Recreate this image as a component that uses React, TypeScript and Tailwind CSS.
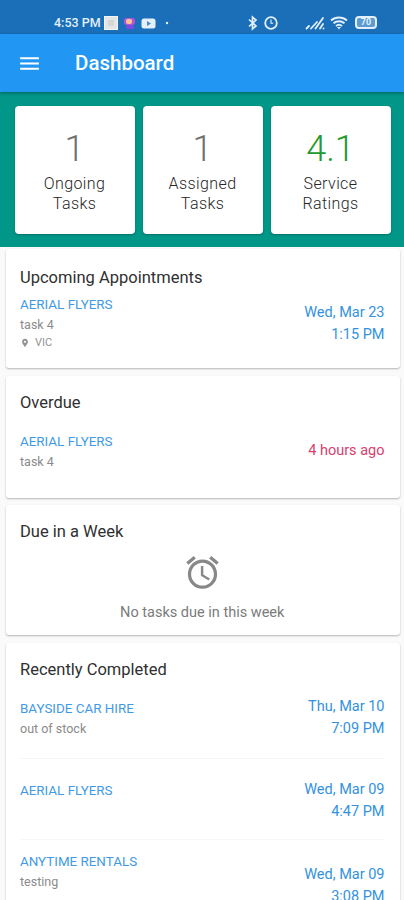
import type { ReactNode } from "react"
import { MdAccessAlarm, MdLocationPin, MdMenu } from "react-icons/md"

function StatusBar() {
  return (
    <div className="flex h-[34px] shrink-0 items-start bg-[#1a6fb8] pt-[15px] pr-[27px] pl-[54px] text-[#e3f0fb]">
      <span className="w-[50px] text-[12.5px] leading-4 font-medium whitespace-nowrap">4:53 PM</span>
      <svg className="h-4 w-[70px]" viewBox="0 0 70 16" aria-hidden>
        <rect x="0.5" y="1.5" width="13" height="13" fill="#e4e6e6" stroke="#f4f4f4" />
        <rect x="4" y="5" width="6" height="6" fill="#d3d7d6" />
        <rect x="20" y="3" width="11" height="7" rx="3" fill="#b455d6" />
        <rect x="22" y="4" width="6" height="5" rx="2" fill="#ffc09a" />
        <rect x="22" y="10" width="8" height="4" rx="1.5" fill="#7a4be0" />
        <rect x="37.5" y="3.5" width="14" height="10" rx="2.5" fill="#e3f0fb" />
        <path d="M43 6v5l4-2.500z" fill="#4c8cc6" />
        <circle cx="63" cy="8" r="1.200" fill="#e3f0fb" />
      </svg>
      <div className="ml-auto flex">
        <svg className="mr-0.5 size-4" viewBox="0 0 16 16" fill="none" stroke="currentColor" strokeWidth="1.700" aria-hidden>
          <path d="M4 4.500l7 6.500-3.500 3V2L11 5l-7 6.500" />
        </svg>
        <svg className="mr-[26px] size-4" viewBox="0 0 16 16" fill="none" stroke="currentColor" strokeWidth="1.800" aria-hidden>
          <circle cx="8" cy="8" r="5.800" />
          <path d="M8 4.500v3.800h2.200" strokeWidth="1.100" />
        </svg>
        <svg className="mr-[5px] h-4 w-5" viewBox="0 0 20 16" fill="none" stroke="currentColor" strokeWidth="1.800" strokeLinecap="round" aria-hidden>
          <path d="M1.500 13.500l2.500-2.500M6 13.500l6-6.500M10.500 13.500l7.500-10.500M15 13.500l3-4.500M18.500 13.500v-.2" />
        </svg>
        <svg className="mr-[7px] h-4 w-[18px]" viewBox="0 0 18 16" fill="none" stroke="currentColor" strokeWidth="1.900" aria-hidden>
          <path d="M1 5.500c4.500-4 11.500-4 16 0M3.500 8.300c3.200-2.800 7.800-2.800 11 0M6 11c1.800-1.500 4.200-1.500 6 0" />
          <path d="M7 12h4l-2 2.500z" fill="currentColor" stroke="none" />
        </svg>
        <span className="mt-px flex h-[13px] w-[22px] items-center justify-center rounded-[4px] border-2 border-current bg-[#5d9bd0] text-[9px] leading-none font-bold">
          70
        </span>
      </div>
    </div>
  )
}

function Stat({ value, label, color = "text-[#707070]" }: { value: string; label: string; color?: string }) {
  return (
    <div className="flex h-32 flex-1 flex-col items-center rounded-[4px] bg-white pt-[23px] shadow-[0_1px_2px_rgba(0,0,0,0.25)]">
      <span className={`text-[36px] leading-[40px] font-light ${color}`}>{value}</span>
      <span className="mt-[5px] w-[84px] text-center text-[16px] leading-[19.500px] font-light tracking-[0.4px] text-[#262626]">
        {label}
      </span>
    </div>
  )
}

function Card({ title, className, children }: { title: string; className: string; children: ReactNode }) {
  return (
    <section className={`mr-1 ml-1.5 shrink-0 rounded-[3px] bg-white pr-[15.500px] pl-[14px] shadow-[0_1px_2px_rgba(0,0,0,0.28)] ${className}`}>
      <h2 className="text-[16.500px] leading-6 text-[#303030]">{title}</h2>
      {children}
    </section>
  )
}

type TaskProps = {
  name: string
  note?: string
  place?: string
  when: string[]
  left: string
  right: string
  tone?: string
}

function Task({ name, note, place, when, left, right, tone = "text-[#3292e0]" }: TaskProps) {
  return (
    <div className="flex justify-between">
      <div className={left}>
        <p className="text-[13.400px] leading-5 text-[#3f9ae6]">{name}</p>
        {note && <p className="text-[12.500px] leading-5 text-[#8a8a8a]">{note}</p>}
        {place && (
          <p className="flex items-center text-[11px] leading-4 text-[#949494]">
            <MdLocationPin className="mr-[5px] size-[10px]" />
            {place}
          </p>
        )}
      </div>
      <div className={`text-right text-[14.500px] leading-[21.500px] ${right} ${tone}`}>
        {when.map((line) => <p key={line}>{line}</p>)}
      </div>
    </div>
  )
}

export default function App() {
  return (
    <main className="flex h-[900px] w-[404px] flex-col overflow-hidden bg-[#fafafa] font-['Roboto',sans-serif]">
      <StatusBar />
      <header className="z-10 flex h-[58px] shrink-0 items-center bg-[#2196f3] pl-[17px] text-white shadow-[0_1px_3px_rgba(0,0,0,0.35)]">
        <MdMenu className="size-[25px]" />
        <h1 className="ml-[33px] text-[20.500px] font-medium">Dashboard</h1>
      </header>
      <div className="flex h-[155px] shrink-0 gap-2 bg-[#009688] pr-[13.500px] pl-[14.500px] pt-[14px]">
        <Stat value="1" label="Ongoing Tasks" />
        <Stat value="1" label="Assigned Tasks" />
        <Stat value="4.1" label="Service Ratings" color="text-[#229a2e]" />
      </div>
      <Card title="Upcoming Appointments" className="mt-0.5 h-[119px] pt-[17px]">
        <Task name="AERIAL FLYERS" note="task 4" place="VIC" when={["Wed, Mar 23", "1:15 PM"]} left="pt-[5px]" right="pt-3" />
      </Card>
      <Card title="Overdue" className="mt-2 h-[122px] pt-[15px]">
        <Task name="AERIAL FLYERS" note="task 4" when={["4 hours ago"]} left="pt-[17px]" right="pt-[25px]" tone="text-[#d8406c]" />
      </Card>
      <Card title="Due in a Week" className="mt-[7px] h-[130px] pt-[15px]">
        <div className="flex flex-col items-center pt-[9px]">
          <MdAccessAlarm className="size-[39px] text-[#888888]" />
          <p className="mt-[11px] text-[14.500px] leading-5 text-[#7b7b7b]">No tasks due in this week</p>
        </div>
      </Card>
      <Card title="Recently Completed" className="mt-2 h-[270px] pt-[15px]">
        <div className="divide-y divide-[#f7f7f7]">
          <div className="h-[77px]">
            <Task name="BAYSIDE CAR HIRE" note="out of stock" when={["Thu, Mar 10", "7:09 PM"]} left="pt-[17px]" right="pt-[14px]" />
          </div>
          <div className="h-[81px]">
            <Task name="AERIAL FLYERS" when={["Wed, Mar 09", "4:47 PM"]} left="pt-[22px]" right="pt-5" />
          </div>
          <div className="h-[81px]">
            <Task name="ANYTIME RENTALS" note="testing" when={["Wed, Mar 09", "3:08 PM"]} left="pt-3" right="pt-6" />
          </div>
        </div>
      </Card>
    </main>
  )
}
